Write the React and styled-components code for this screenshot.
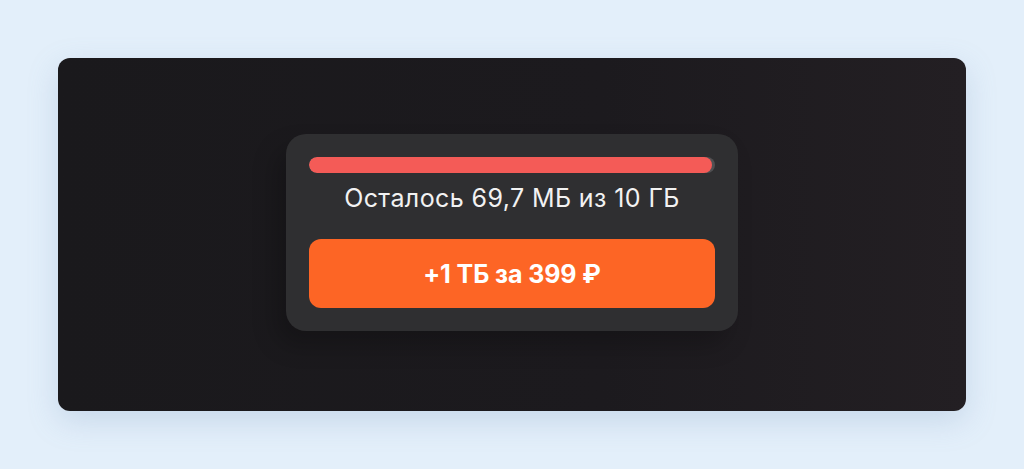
import React from 'react';
import styled, {createGlobalStyle} from 'styled-components';

const GlobalStyle = createGlobalStyle`
  html, body {
    margin: 0;
    padding: 0;
    background: #e3effa;
    font-family: Inter, "Open Sans", "Noto Sans", sans-serif;
  }
`;

const Page = styled.div`
  width: 1024px;
  height: 469px;
  box-sizing: border-box;
  padding: 58px;
  display: flex;
`;

const Screen = styled.div`
  flex: 1;
  border-radius: 12px;
  background: linear-gradient(90deg, #1a191c 0%, #1c1a1e 60%, #231f23 100%);
  box-shadow: 0 10px 30px rgba(120, 150, 190, 0.25);
  display: flex;
  align-items: center;
  justify-content: center;
  padding-bottom: 4px;
`;

const Panel = styled.div`
  width: 452px;
  box-sizing: border-box;
  padding: 23px;
  border-radius: 20px;
  background: #2f2f31;
  box-shadow: -10px 14px 24px rgba(0, 0, 0, 0.22);
  display: flex;
  flex-direction: column;
`;

const Track = styled.div`
  height: 16px;
  border-radius: 8px;
  background: #505052;
  overflow: hidden;
`;

const Fill = styled.div`
  height: 100%;
  border-radius: 8px;
  background: #f45b57;
`;

const Caption = styled.div`
  margin-top: 9px;
  text-align: center;
  color: #f2f2f2;
  font-size: 25px;
  line-height: 32px;
  letter-spacing: 0.4px;
`;

const BuyButton = styled.button`
  margin-top: 25px;
  height: 69px;
  border: none;
  border-radius: 12px;
  background: #fd6525;
  color: #fff;
  font-family: inherit;
  font-size: 25px;
  font-weight: 700;
  letter-spacing: -0.1px;
  cursor: pointer;
`;

export default function App() {
  const used = 10 * 1024 - 69.7;
  const total = 10 * 1024;
  return (
    <Page>
      <GlobalStyle/>
      <Screen>
        <Panel>
          <Track>
            <Fill style={{width: `${(used / total) * 100}%`}}/>
          </Track>
          <Caption>Осталось 69,7 МБ из 10 ГБ</Caption>
          <BuyButton>+1 ТБ за 399 ₽</BuyButton>
        </Panel>
      </Screen>
    </Page>
  );
}
